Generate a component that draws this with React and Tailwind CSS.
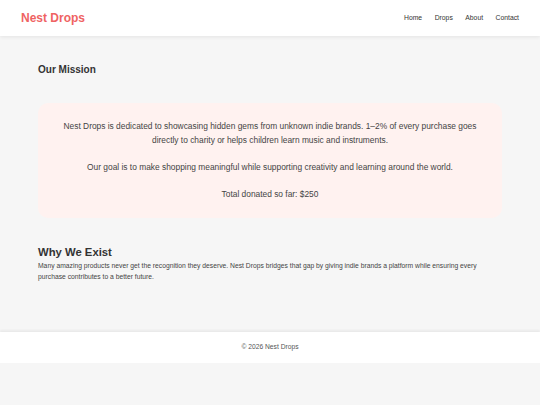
import React from 'react';

export default function App() {
  return (
    <div className="min-h-[405px] bg-[#f6f6f6] font-['Liberation_Sans',Arial,sans-serif]">
      <header className="flex h-[36px] items-center justify-between bg-white px-[21px] shadow-[0_1px_4px_rgba(0,0,0,0.08)]">
        <span className="text-[12px] font-bold text-[#ef6363]">Nest Drops</span>
        <nav className="flex gap-[12.5px] text-[6.8px] text-[#333]">
          <a>Home</a>
          <a>Drops</a>
          <a>About</a>
          <a>Contact</a>
        </nav>
      </header>

      <main className="px-[38px] pt-[28px] pb-[50px]">
        <h2 className="text-[10px] font-bold leading-[12px] text-[#333]">Our Mission</h2>

        <div className="mt-[27px] rounded-[10px] bg-[#fff2f0] px-[20px] py-[17px] text-center text-[8.4px] leading-[13.5px] text-[#444]">
          <p>
            Nest Drops is dedicated to showcasing hidden gems from unknown indie brands. 1–2% of every purchase goes
            directly to charity or helps children learn music and instruments.
          </p>
          <p className="mt-[13.5px]">
            Our goal is to make shopping meaningful while supporting creativity and learning around the world.
          </p>
          <p className="mt-[13.5px]">Total donated so far: $250</p>
        </div>

        <h2 className="mt-[27px] text-[11.3px] font-bold leading-[14px] text-[#333]">Why We Exist</h2>
        <p className="mt-[1px] text-[6.75px] leading-[11px] text-[#444]">
          Many amazing products never get the recognition they deserve. Nest Drops bridges that gap by giving indie brands a platform while ensuring every
          purchase contributes to a better future.
        </p>
      </main>

      <footer className="flex h-[31px] items-center justify-center bg-white text-[6.7px] text-[#555] shadow-[0_-2px_2px_rgba(0,0,0,0.05)]">
        © 2026 Nest Drops
      </footer>
    </div>
  );
}
